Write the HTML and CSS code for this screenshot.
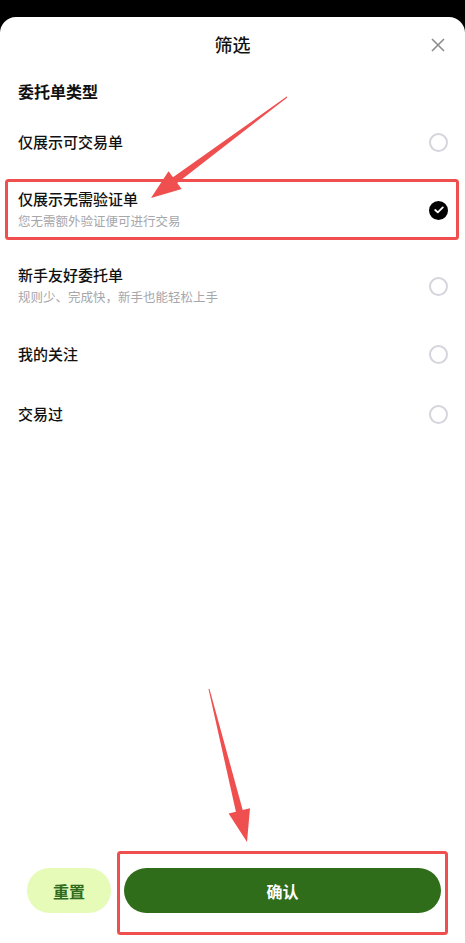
FILE: index.html
```html
<!DOCTYPE html>
<html lang="zh-CN">
<head>
  <meta charset="UTF-8" />
  <title>筛选</title>
  <link rel="stylesheet" href="styles.css">
</head>
<body>

  <div class="sheet">
    <div class="sheet-header">
      <span class="sheet-title">筛选</span>
      <svg class="close" width="14" height="14" viewBox="0 0 14 14">
        <path d="M1 1 L13 13 M13 1 L1 13" stroke="#8c8c8c" stroke-width="1.6" fill="none" />
      </svg>
    </div>

    <h2 class="section-title">委托单类型</h2>

    <ul class="options">
      <li class="option">
        <div class="option-text">
          <span class="option-name">仅展示可交易单</span>
        </div>
        <span class="radio"></span>
      </li>
      <li class="option option-double">
        <div class="option-text">
          <span class="option-name">仅展示无需验证单</span>
          <span class="option-desc">您无需额外验证便可进行交易</span>
        </div>
        <span class="radio checked">
          <svg width="10" height="8" viewBox="0 0 10 8">
            <path d="M1.2 4 L3.8 6.4 L8.8 1.4" stroke="#fff" stroke-width="1.8" fill="none" stroke-linecap="round" stroke-linejoin="round" />
          </svg>
        </span>
      </li>
      <li class="option option-double">
        <div class="option-text">
          <span class="option-name">新手友好委托单</span>
          <span class="option-desc">规则少、完成快，新手也能轻松上手</span>
        </div>
        <span class="radio"></span>
      </li>
      <li class="option">
        <div class="option-text">
          <span class="option-name">我的关注</span>
        </div>
        <span class="radio"></span>
      </li>
      <li class="option">
        <div class="option-text">
          <span class="option-name">交易过</span>
        </div>
        <span class="radio"></span>
      </li>
    </ul>

    <div class="sheet-footer">
      <button class="btn-reset">重置</button>
      <button class="btn-confirm">确认</button>
    </div>
  </div>

  <!-- marcações em vermelho por cima da tela -->
  <svg class="annotations" width="465" height="943" viewBox="0 0 465 943">
    <rect x="6.5" y="180.5" width="451" height="58" rx="2" fill="none" stroke="#f04f4f" stroke-width="3" />
    <rect x="118.5" y="852.5" width="328" height="81" rx="2" fill="none" stroke="#f04f4f" stroke-width="3" />
    <polygon fill="#f04f4f" points="286.7,96.6 173.0,177.3 168.5,171.3 151,198 181.7,189.0 177.2,182.9 287.3,97.4" />
    <polygon fill="#f04f4f" points="208.5,689.1 235.9,811.7 228.6,813.6 247,842 250.0,808.3 242.7,810.1 209.5,688.9" />
  </svg>

</body>
</html>
```

FILE: styles.css
```css
body {
  margin: 0;
  background: #000;
  font-family: "Noto Sans CJK SC", "Noto Sans", sans-serif;
  color: #111;
}

.sheet {
  margin-top: 17px;
  height: 926px;
  background: #fff;
  border-radius: 16px 16px 0 0;
  display: flex;
  flex-direction: column;
  box-sizing: border-box;
}

.sheet-header {
  height: 54px;
  display: flex;
  align-items: center;
  justify-content: center;
  position: relative;
}

.sheet-title {
  font-size: 18px;
  font-weight: 500;
}

.close {
  position: absolute;
  right: 20px;
  top: 21px;
}

.section-title {
  margin: 8px 0 9px;
  padding: 0 18px;
  font-size: 16px;
  font-weight: 700;
  line-height: 24px;
}

.options {
  list-style: none;
  margin: 0;
  padding: 0;
}

.option {
  display: flex;
  align-items: center;
  justify-content: space-between;
  padding: 19px 18px;
}

.option-double {
  padding: 16px 18px;
}

.option-text {
  display: flex;
  flex-direction: column;
}

.option-name {
  font-size: 15px;
  font-weight: 500;
  line-height: 22px;
}

.option-desc {
  font-size: 12.5px;
  line-height: 22px;
  color: #a6a6ab;
}

.radio {
  width: 15px;
  height: 15px;
  border: 2px solid #d5d5dc;
  border-radius: 50%;
  margin-right: -1px;
  display: flex;
  align-items: center;
  justify-content: center;
}

.radio.checked {
  background: #000;
  border-color: #000;
}

.sheet-footer {
  margin-top: auto;
  display: flex;
  gap: 13px;
  padding: 0 24px 30px 27px;
}

.sheet-footer button {
  height: 45px;
  border: none;
  border-radius: 23px;
  font-family: inherit;
  font-size: 16px;
  font-weight: 700;
  cursor: pointer;
}

.btn-reset {
  width: 84px;
  background: #e6fbb8;
  color: #2f6b1c;
}

.btn-confirm {
  flex: 1;
  background: #2f6d1a;
  color: #fff;
}

.annotations {
  position: absolute;
  left: 0;
  top: 0;
  pointer-events: none;
}
```
